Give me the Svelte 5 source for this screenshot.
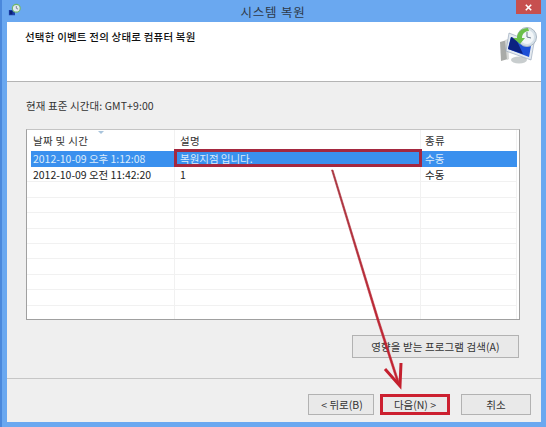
<script>
	const rows = [
		{ date: '2012-10-09 오후 1:12:08', desc: '복원지점 입니다.', kind: '수동', selected: true },
		{ date: '2012-10-09 오전 11:42:20', desc: '1', kind: '수동' },
		...Array.from({ length: 10 }, () => ({ date: '', desc: '', kind: '' }))
	];
</script>

<div class="window">
	<div class="titlebar">
		<svg class="appicon" viewBox="0 0 16 16" aria-hidden="true">
			<rect x="1" y="8" width="7" height="6" fill="#1c3fa8" />
			<rect x="2" y="9" width="3" height="4" fill="#0a1f70" />
			<circle cx="9.5" cy="6" r="4.5" fill="#dfeaf0" stroke="#6fb56a" stroke-width="1.3" />
			<path d="M9.5 3.5v2.5l2 1" stroke="#557" stroke-width=".8" fill="none" />
		</svg>
		<span class="title">시스템 복원</span>
		<div class="close">
			<svg viewBox="0 0 10 10" aria-hidden="true"><path d="M2 2l6 6M8 2l-6 6" stroke="#fff" stroke-width="1.8" /></svg>
		</div>
	</div>

	<div class="client">
		<header>
			<h1>선택한 이벤트 전의 상태로 컴퓨터 복원</h1>
			<svg class="restore" viewBox="0 0 37 37" aria-hidden="true">
				<path d="M0 15l7-2 1 19-7 2z" fill="#a9aba8" />
				<path d="M5 13l3-1 1 20-2 1z" fill="#d6d8d6" />
				<ellipse cx="19" cy="33" rx="8" ry="3.4" fill="#c8cdce" />
				<path d="M9 6l25 10-3 17-25-9z" fill="#e4eaf0" stroke="#8ea0b4" stroke-width=".6" />
				<path d="M11 10l20 9-2 11-21-8z" fill="#1c4fd6" />
				<path d="M11 10l5 2 7 15-15-5z" fill="#0b2180" />
				<circle cx="27" cy="10" r="9.5" fill="#d5e0e8" stroke="#a9b6c2" />
				<circle cx="27" cy="10" r="7" fill="#f2f6f8" />
				<path d="M27 5v5l4 1" stroke="#6b7a8a" stroke-width="1" fill="none" />
				<path d="M17 11c0-6 5-10 11-10l1 3c-4 0-7 3-7 7l3 0-5 6-7-6z" fill="#6cc04a" />
			</svg>
		</header>

		<div class="body">
			<p class="zone">현재 표준 시간대: GMT+9:00</p>

			<div class="table">
				<div class="row head">
					<div class="cell">날짜 및 시간</div>
					<div class="cell">설명</div>
					<div class="cell">종류</div>
				</div>
				<span class="sort"></span>
				{#each rows as r}
					<div class="row" class:selected={r.selected}>
						<div class="cell">{r.date}</div>
						<div class="cell">{r.desc}</div>
						<div class="cell">{r.kind}</div>
					</div>
				{/each}
			</div>

			<div class="search-row">
				<button class="search">영향을 받는 프로그램 검색(A)</button>
			</div>
		</div>

		<footer>
			<button class="back">&lt; 뒤로(B)</button>
			<button class="next">다음(N) &gt;</button>
			<button class="cancel">취소</button>
		</footer>
	</div>

	<div class="mark-row"></div>
	<svg class="arrow" viewBox="0 0 546 427" aria-hidden="true">
		<defs>
			<linearGradient id="shaft" x1="0" y1="0" x2="0" y2="1">
				<stop offset="0" stop-color="#a8343f" />
				<stop offset="1" stop-color="#c4202e" />
			</linearGradient>
		</defs>
		<path d="M333 170L379 320L400 385L398 385L377 320L331.5 170z" fill="url(#shaft)" stroke="url(#shaft)" stroke-width=".6" />
		<path d="M385 369L400 386L401 363" stroke="#c4202e" stroke-width="3" fill="none" />
	</svg>
</div>

<style>
	:global(body) {
		margin: 0;
		background: #6aa8f0;
	}

	.window {
		position: relative;
		width: 546px;
		height: 427px;
		box-sizing: border-box;
		padding: 0 5px 5px 5px;
		background: #6aa8f0;
		border-left: 2px solid #4a88dc;
		font-family: "Noto Sans CJK KR", "Liberation Sans", sans-serif;
		font-size: 10.5px;
		color: #222;
		display: flex;
		flex-direction: column;
		overflow: hidden;
	}

	.titlebar {
		height: 22px;
		flex: none;
		display: flex;
		align-items: center;
		justify-content: center;
		position: relative;
	}

	.appicon {
		position: absolute;
		left: 1px;
		top: 3px;
		width: 14px;
		height: 14px;
	}

	.title {
		font-size: 12.5px;
		letter-spacing: 0.8px;
		color: #2e3a4a;
		margin-left: -2px;
	}

	.close {
		position: absolute;
		right: 0;
		top: 0;
		width: 25px;
		height: 14px;
		background: #c7504f;
		display: flex;
		align-items: center;
		justify-content: center;
	}

	.close svg {
		width: 9px;
		height: 9px;
	}

	.client {
		flex: 1;
		background: #efefef;
		display: flex;
		flex-direction: column;
		min-height: 0;
	}

	header {
		height: 59px;
		flex: none;
		background: #fff;
		border-bottom: 1px solid #b4b4b4;
		position: relative;
		box-sizing: content-box;
	}

	h1 {
		margin: 0;
		padding: 7px 0 0 18px;
		font-size: 10.5px;
		line-height: 16px;
		letter-spacing: 0.2px;
		font-weight: 500;
		color: #111;
	}

	.restore {
		position: absolute;
		right: 4px;
		top: 5px;
		width: 37px;
		height: 37px;
	}

	.body {
		flex: 1;
		padding: 0 21px 0 19px;
		display: flex;
		flex-direction: column;
	}

	.zone {
		margin: 17px 0 0;
		line-height: 14px;
		font-size: 10.5px;
		letter-spacing: 0.1px;
		color: #333;
	}

	.table {
		margin-top: 16px;
		height: 191px;
		box-sizing: border-box;
		background: #fff;
		border: 1px solid #a0a0a0;
		border-top-color: #c4c4c4;
		overflow: hidden;
		padding: 0 2px 0 0;
		position: relative;
	}

	.row {
		display: grid;
		grid-template-columns: 148px 246px 1fr;
		height: 15.4px;
		line-height: 15px;
		font-size: 10.5px;
		letter-spacing: -0.03px;
		border-bottom: 1px solid #f1f1f1;
		box-sizing: border-box;
	}

	.row.head {
		height: 21px;
		line-height: 21px;
		border-bottom: 0;
		color: #333;
		letter-spacing: 0.3px;
	}

	.cell {
		padding-left: 6px;
		border-right: 1px solid #f1f1f1;
		white-space: nowrap;
		overflow: hidden;
	}

	.cell + .cell {
		padding-left: 5px;
	}

	.cell + .cell + .cell {
		padding-left: 4px;
	}

	.row.selected {
		background: #3a90ee;
		color: #dcecfb;
		margin-left: 4px;
		grid-template-columns: 144px 246px 1fr;
		height: 16px;
		border-bottom: 0;
	}

	.row.selected .cell {
		border-right: 0;
	}

	.row.selected .cell:first-child {
		padding-left: 2px;
	}

	.sort {
		position: absolute;
		left: 71px;
		top: 1px;
		border-left: 3px solid transparent;
		border-right: 3px solid transparent;
		border-top: 3px solid #a8c4dc;
	}

	.search-row {
		display: flex;
		justify-content: flex-end;
		margin-top: 15px;
	}

	button {
		font: inherit;
		color: #333;
		height: 21px;
		padding: 0;
		box-sizing: border-box;
		background: #e9e9e9;
		border: 1px solid #b2b2b2;
		border-radius: 0;
		letter-spacing: 0;
	}

	.search {
		width: 167px;
		height: 23px;
		margin-right: 1px;
		letter-spacing: 0.1px;
	}

	footer {
		height: 28px;
		flex: none;
		margin-top: auto;
		border-top: 1px solid #c6c6c6;
		box-sizing: content-box;
		display: flex;
		justify-content: flex-end;
		align-items: flex-start;
		padding: 15px 10px 0 0;
	}

	.back {
		width: 66px;
		padding-left: 2px;
	}

	.next {
		border: 3px solid #cc2030;
		margin-left: 6px;
		width: 70px;
	}

	.cancel {
		margin-left: 11px;
		width: 70px;
	}

	.mark-row {
		position: absolute;
		left: 172px;
		top: 149px;
		width: 248px;
		height: 18px;
		box-sizing: border-box;
		border: 3px solid #a4283f;
	}

	.arrow {
		position: absolute;
		left: -2px;
		top: 0;
		width: 546px;
		height: 427px;
		pointer-events: none;
	}
</style>
